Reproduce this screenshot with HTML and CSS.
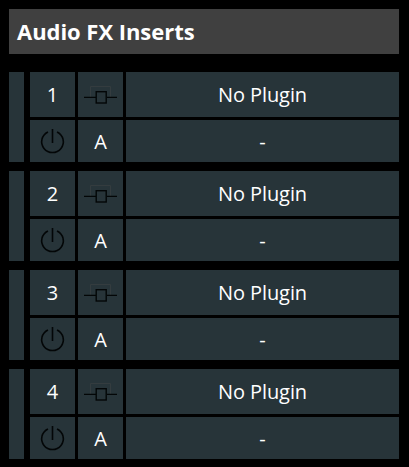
FILE: index.html
```
<!DOCTYPE html>
<html lang="en">
<head>
    <meta charset="UTF-8">
    <meta name="viewport" content="width=device-width, initial-scale=1.0">
    <title>Audio FX Inserts</title>
    <link rel="stylesheet" href="styles.css">
</head>
<body>
    <svg class="symbols" width="0" height="0">
        <symbol id="icon-bypass" viewBox="0 0 45 45">
            <path d="M12.5 25V14.5H32.5V25" stroke="#343c3f" />
            <path d="M6 25.4H18M29 25.4H39" stroke="#030607" stroke-width="1.3" />
            <rect x="18.2" y="19.7" width="10" height="11.3" stroke="#030607" stroke-width="1.4" />
        </symbol>
        <symbol id="icon-power" viewBox="0 0 45 42">
            <path d="M18 11.9A10.8 10.8 0 1 0 27 11.9M22.5 9V23" stroke="#030607" stroke-width="1.6" />
        </symbol>
    </svg>

    <h1>Audio FX Inserts</h1>

    <div class="slots">
        <div class="slot">
            <div class="cell handle"></div>
            <div class="cell">1</div>
            <div class="cell"><svg class="bypass"><use href="#icon-bypass" /></svg></div>
            <div class="cell name">No Plugin</div>
            <div class="cell"><svg class="power"><use href="#icon-power" /></svg></div>
            <div class="cell">A</div>
            <div class="cell">-</div>
        </div>
        <div class="slot">
            <div class="cell handle"></div>
            <div class="cell">2</div>
            <div class="cell"><svg class="bypass"><use href="#icon-bypass" /></svg></div>
            <div class="cell name">No Plugin</div>
            <div class="cell"><svg class="power"><use href="#icon-power" /></svg></div>
            <div class="cell">A</div>
            <div class="cell">-</div>
        </div>
        <div class="slot">
            <div class="cell handle"></div>
            <div class="cell">3</div>
            <div class="cell"><svg class="bypass"><use href="#icon-bypass" /></svg></div>
            <div class="cell name">No Plugin</div>
            <div class="cell"><svg class="power"><use href="#icon-power" /></svg></div>
            <div class="cell">A</div>
            <div class="cell">-</div>
        </div>
        <div class="slot">
            <div class="cell handle"></div>
            <div class="cell">4</div>
            <div class="cell"><svg class="bypass"><use href="#icon-bypass" /></svg></div>
            <div class="cell name">No Plugin</div>
            <div class="cell"><svg class="power"><use href="#icon-power" /></svg></div>
            <div class="cell">A</div>
            <div class="cell">-</div>
        </div>
    </div>
</body>
</html>
```

FILE: styles.css
```
* {
    box-sizing: border-box;
}
body {
    margin: 0;
    padding: 9px 10px 8px 9px;
    background-color: black;
    color: white;
    font-family: "Open Sans", sans-serif;
    font-size: 20px;
}
h1 {
    height: 45px;
    margin: 0 0 18px;
    padding-left: 8px;
    background-color: #404040;
    font-size: 22px;
    letter-spacing: -0.04px;
    line-height: 45px;
}
.symbols {
    display: block;
    height: 0;
}
.slots {
    display: grid;
    gap: 9px;
}
.slot {
    display: grid;
    grid-template-columns: 18px 45px 45px 1fr;
    grid-template-rows: 45px 42px;
    gap: 3px;
}
.cell {
    display: flex;
    align-items: center;
    justify-content: center;
    background-color: #273439;
}
.handle {
    grid-row: span 2;
    width: 15px;
}
.name {
    letter-spacing: -0.08px;
}
.cell svg {
    width: 45px;
    fill: none;
}
.bypass {
    height: 45px;
}
.power {
    height: 42px;
}
```
